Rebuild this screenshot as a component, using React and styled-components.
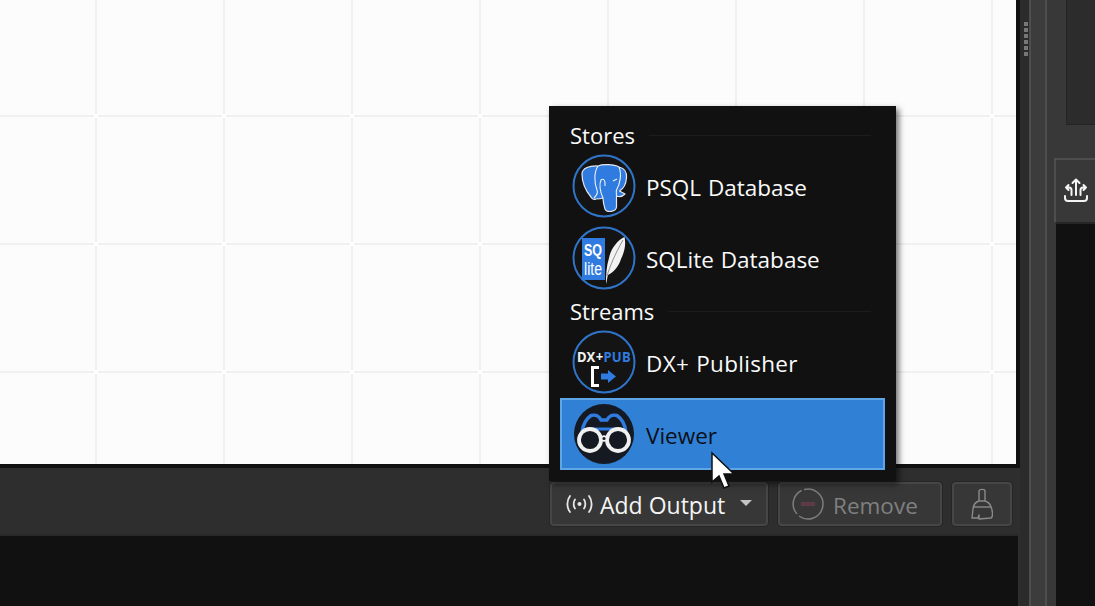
import styled, { createGlobalStyle } from 'styled-components'

const GlobalStyle = createGlobalStyle`
  html, body { margin: 0; padding: 0; background: #2e2e2e; }
  body { font-family: "Open Sans", "Noto Sans", sans-serif; }
`

const Page = styled.div`
  width: 1095px;
  height: 606px;
  display: flex;
  overflow: hidden;
  position: relative;
`

const MainColumn = styled.div`
  width: 1020px;
  display: flex;
  flex-direction: column;
  flex-shrink: 0;
`

const Canvas = styled.div`
  height: 464px;
  position: relative;
  border-right: 4px solid #111;
  border-bottom: 4px solid #111;
  background-color: #fcfcfc;
  background-image:
    linear-gradient(to right, transparent 95px, #f0f0f0 95px, #f0f0f0 97px, transparent 97px),
    linear-gradient(to bottom, transparent 115px, #f0f0f0 115px, #f0f0f0 117px, transparent 117px);
  background-size: 128px 100%, 100% 128px;
  background-repeat: repeat-x, repeat-y;

  /* little gaps where the grid lines cross */
  &::after {
    content: '';
    position: absolute;
    inset: 0;
    background-image: linear-gradient(to right, transparent 94px, #fdfdfd 94px, #fdfdfd 98px, transparent 98px);
    background-size: 128px 100%;
    background-repeat: repeat-x;
    mask-image: linear-gradient(to bottom, transparent 114px, #000 114px, #000 118px, transparent 118px);
    mask-size: 100% 128px;
    mask-repeat: repeat-y;
  }
`

const Toolbar = styled.div`
  height: 66px;
  background: #2e2e2e;
  display: flex;
  justify-content: flex-end;
  align-items: flex-start;
  gap: 10px;
  padding: 14px 8px 0 0;
  box-sizing: border-box;
`

const ToolButton = styled.div`
  height: 44px;
  width: ${p => p.$width}px;
  box-sizing: border-box;
  background: #373737;
  border: 2px solid #464646;
  border-radius: 4px;
  box-shadow: 0 0 0 1px #262626;
  display: flex;
  align-items: center;
  font-size: ${p => (p.$disabled ? 22.5 : 23)}px;
  color: ${p => (p.$disabled ? '#7f8080' : '#f4f4f4')};
  padding-left: ${p => p.$pad || 0}px;
  gap: ${p => p.$gap || 0}px;
`

const Label = styled.span`
  padding-top: 2px;
`

const Caret = styled.span`
  width: 0;
  height: 0;
  border-left: 6px solid transparent;
  border-right: 6px solid transparent;
  border-top: 6px solid #c4c4c4;
  margin-left: 8px;
  margin-bottom: 2px;
`

const Console = styled.div`
  flex: 1;
  width: 1018px;
  background: #111;
  border-top: 2px solid #282828;
`

const Splitter = styled.div`
  width: 9px;
  background: #2b2b2b;
  display: flex;
  flex-direction: column;
  align-items: flex-start;
  gap: 2px;
  padding: 22px 0 0 4px;
  box-sizing: border-box;
  flex-shrink: 0;
`

const GripDot = styled.span`
  width: 4px;
  height: 4px;
  background: #777;
`

const Gutter = styled.div`
  width: 18px;
  background: #3c3c3c;
  border-left: 2px solid #4e4e4e;
  border-right: 2px solid #4e4e4e;
  box-sizing: border-box;
  flex-shrink: 0;
`

const RightPanel = styled.div`
  flex: 1;
  background: #383838;
  display: flex;
  flex-direction: column;
  align-items: flex-end;
`

const TopPane = styled.div`
  width: 29px;
  height: 125px;
  box-sizing: border-box;
  background: #2c2c2c;
  border-left: 1px solid #242424;
  border-bottom: 1px solid #242424;
`

const Tab = styled.div`
  margin-top: 33px;
  width: 41px;
  height: 64px;
  box-sizing: border-box;
  background: #383838;
  border-top: 2px solid #4e4e4e;
  border-left: 2px solid #4e4e4e;
  display: flex;
  align-items: center;
  padding: 0 0 3px 8px;
`

const TabBody = styled.div`
  flex: 1;
  width: 39px;
  background: #111;
  border-top: 2px solid #262626;
`

const Menu = styled.div`
  position: absolute;
  left: 549px;
  top: 106px;
  width: 347px;
  height: 375px;
  box-sizing: border-box;
  background: #111;
  padding: 17px 11px 0 11px;
  box-shadow: 3px 3px 6px rgba(0, 0, 0, 0.55);
`

const GroupTitle = styled.div`
  display: flex;
  align-items: center;
  height: 26px;
  padding: 0 0 2px 10px;
  box-sizing: border-box;
  gap: 14px;
  color: #fafafa;
  font-size: 22px;
  line-height: 24px;
  margin-top: ${p => p.$top || 0}px;
  &::after {
    content: '';
    flex: 1;
    height: 1px;
    margin-right: 14px;
    background: #1c1c1c;
  }
`

const Row = styled.div`
  height: ${p => (p.$active ? 72 : 64)}px;
  box-sizing: border-box;
  display: flex;
  align-items: center;
  gap: 10px;
  padding-left: ${p => (p.$active ? 10 : 12)}px;
  margin-top: ${p => p.$top || 0}px;
  color: ${p => (p.$active ? '#0a0f18' : '#fafafa')};
  font-size: 22.5px;
  word-spacing: 1px;
  letter-spacing: ${p => p.$track || 0}px;
  background: ${p => (p.$active ? '#3081d6' : 'transparent')};
  border: ${p => (p.$active ? '2px solid #5ea6e8' : 'none')};
`

const IconFrame = styled.svg`
  width: 64px;
  height: 64px;
  flex-shrink: 0;
`

const Cursor = styled.svg`
  position: absolute;
  left: 710px;
  top: 451px;
  width: 28px;
  height: 40px;
`

function Ring() {
  return <circle cx="32" cy="32" r="30.5" fill="#141414" stroke="#2f74c8" strokeWidth="2" />
}

function PsqlIcon() {
  return (
    <IconFrame viewBox="0 0 64 64">
      <Ring />
      <path
        d="M10 20 C10 14 18 11.5 26 12 C30 10 42 10 47 13 C52 14 55 18 54.5 24 C54 30 51 35 47.5 37 L53 40 C50 43 47 43 44.5 42 L44.5 53 C44 58 35 59 33 55 C31.5 50 31 47 31 44 C29 45 26 45 24 45 C22 46 20 45 19 43 C14 37 10 28 10 20 Z"
        fill="#2f7be0"
        stroke="#e4e8ee"
        strokeWidth="1.2"
        strokeLinejoin="round"
      />
      <path
        d="M26 12 C22 18 22 28 25 36 C26 38 25 41 22 44 M31 44 C28 38 27 30 29 26 C31 24 34 26 33 32 M47 13 C50 20 48 30 44.5 36 C44 38 44.5 40 44.5 42 M45 25 L41 27"
        fill="none"
        stroke="#f0f3f6"
        strokeWidth="1.1"
      />
    </IconFrame>
  )
}

function SqliteIcon() {
  return (
    <IconFrame viewBox="0 0 64 64">
      <Ring />
      <rect x="10" y="12" width="23" height="42" fill="#2f7be0" />
      <text x="12" y="30" fill="#fff" fontFamily="Liberation Sans" fontWeight="700" fontSize="17" textLength="18" lengthAdjust="spacingAndGlyphs">SQ</text>
      <text x="12" y="49" fill="#fff" fontFamily="Liberation Sans" fontSize="18" textLength="18" lengthAdjust="spacingAndGlyphs">lite</text>
      <path
        d="M34 58 C34 48 34.5 40 37 32 C39 22 46 14 52.5 11 C54 17 53 25 49 33 C47 40 42 46 36 49 C35 52 35 55 34 58 Z"
        fill="#f2f2f2"
      />
      <path d="M35 50 C38 40 43 28 51 14" fill="none" stroke="#777" strokeWidth="0.8" />
    </IconFrame>
  )
}

function PublisherIcon() {
  return (
    <IconFrame viewBox="0 0 64 64">
      <Ring />
      <text x="5" y="32" fontFamily="Noto Sans, sans-serif" fontWeight="700" fontSize="14" textLength="54" lengthAdjust="spacingAndGlyphs" fill="#f2f2f2">
        DX+<tspan fill="#2f7be0">PUB</tspan>
      </text>
      <path d="M27 37.5 H20.5 V55.5 H27" fill="none" stroke="#fff" strokeWidth="3" />
      <path d="M29 43.5 H36 V40 L44 46.5 L36 53 V49.5 H29 Z" fill="#2f7be0" />
    </IconFrame>
  )
}

function ViewerIcon() {
  return (
    <IconFrame viewBox="0 0 64 64">
      <circle cx="32" cy="32" r="30" fill="#151a22" />
      <path
        d="M10 30 C11 22 14 17 19 13.5 C23 12.5 27 14 29 18 L35 18 C37 14 41 12.5 45 13.5 C50 17 53 22 54 30"
        fill="none"
        stroke="#2f7be0"
        strokeWidth="3.4"
      />
      <path d="M21 27 L43 27" stroke="#2f7be0" strokeWidth="3" />
      <circle cx="18" cy="38" r="11" fill="#151a22" stroke="#f0f0f0" strokeWidth="3.8" />
      <circle cx="46" cy="38" r="11" fill="#151a22" stroke="#f0f0f0" strokeWidth="3.8" />
      <circle cx="32" cy="36.5" r="2.4" fill="#151a22" stroke="#f0f0f0" strokeWidth="1.6" />
    </IconFrame>
  )
}

function RadioIcon() {
  return (
    <svg width="27" height="18" viewBox="0 0 27 18" fill="none" stroke="#e8e8e8" strokeWidth="1.8" strokeLinecap="round">
      <circle cx="13.5" cy="9" r="2" fill="#e8e8e8" stroke="none" />
      <path d="M9 4.5 C7.2 7 7.2 11 9 13.5 M18 4.5 C19.8 7 19.8 11 18 13.5" />
      <path d="M4 1 C0.5 5.5 0.5 12.5 4 17 M23 1 C26.5 5.5 26.5 12.5 23 17" />
    </svg>
  )
}

function RemoveIcon() {
  return (
    <svg width="32" height="32" viewBox="0 0 32 32" fill="none">
      <path d="M12 1.5 A15 15 0 1 1 7 28 M5 26 A15 15 0 0 1 9.5 2.5" stroke="#7d7d7d" strokeWidth="1.5" />
      <path d="M9 16 H23" stroke="#5e3a48" strokeWidth="4" />
    </svg>
  )
}

function BrushIcon() {
  return (
    <svg width="22" height="32" viewBox="0 0 22 32" fill="none" stroke="#8a8a8a" strokeWidth="1.4" strokeLinejoin="round">
      <path d="M8 13 V3 C8 0.8 14 0.8 14 3 V13" />
      <path d="M8 13 C4 14 2.5 17 2 21 L1 30 H7 L8 27 V31 L20 30 C22 29 22 27 21 22 C20 17 18 14 14 13 Z" />
      <path d="M3 19 H20" />
    </svg>
  )
}

function ShareIcon() {
  return (
    <svg width="24" height="24" viewBox="0 0 24 24" fill="none" stroke="#f4f4f4" strokeWidth="2" strokeLinecap="round" strokeLinejoin="round">
      <path d="M12 17 V1.5 M8.5 5 L12 1.5 L15.5 5" />
      <path d="M7.5 17 V12 C7.5 10.5 6.5 9.5 5 9.5 H2 M4.5 7 L2 9.5 L4.5 12" />
      <path d="M16.5 17 V12 C16.5 10.5 17.5 9.5 19 9.5 H22 M19.5 7 L22 9.5 L19.5 12" />
      <path d="M1 18 V20 C1 21.8 2 23 4 23 H20 C22 23 23 21.8 23 20 V18" />
    </svg>
  )
}

const gripDots = [0, 1, 2, 3, 4, 5]

export default function App() {
  return (
    <Page>
      <GlobalStyle />
      <MainColumn>
        <Canvas />
        <Toolbar>
          <ToolButton $width={218} $pad={14} $gap={7}>
            <RadioIcon />
            <Label>Add Output</Label>
            <Caret />
          </ToolButton>
          <ToolButton $width={164} $pad={12} $gap={9} $disabled>
            <RemoveIcon />
            <Label>Remove</Label>
          </ToolButton>
          <ToolButton $width={60} $pad={17} $disabled>
            <BrushIcon />
          </ToolButton>
        </Toolbar>
        <Console />
      </MainColumn>
      <Splitter>
        {gripDots.map(i => <GripDot key={i} />)}
      </Splitter>
      <Gutter />
      <RightPanel>
        <TopPane />
        <Tab><ShareIcon /></Tab>
        <TabBody />
      </RightPanel>

      <Menu>
        <GroupTitle>Stores</GroupTitle>
        <Row $top={5}><PsqlIcon /><Label>PSQL Database</Label></Row>
        <Row $top={8}><SqliteIcon /><Label>SQLite Database</Label></Row>
        <GroupTitle $top={9}>Streams</GroupTitle>
        <Row $top={5} $track={0.3}><PublisherIcon /><Label>DX+ Publisher</Label></Row>
        <Row $active $top={4}><ViewerIcon /><Label>Viewer</Label></Row>
      </Menu>

      <Cursor viewBox="0 0 28 40">
        <path d="M2 2 L2 31 L9 25 L14 37 L19 35 L14 23 L24 23 Z" fill="#fff" stroke="#111" strokeWidth="1.5" />
      </Cursor>
    </Page>
  )
}
